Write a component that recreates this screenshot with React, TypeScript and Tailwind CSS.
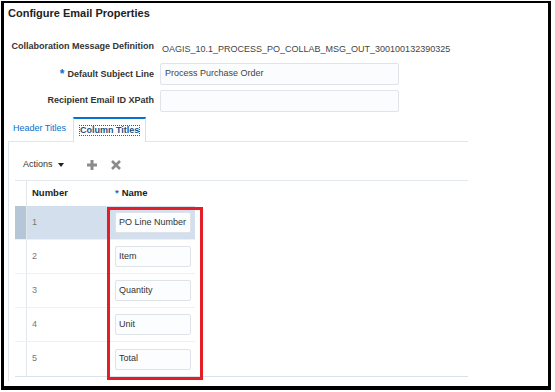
const font = { fontFamily: '"Liberation Sans", Arial, sans-serif' };

const rows = [
  { n: "1", name: "PO Line Number", selected: true },
  { n: "2", name: "Item" },
  { n: "3", name: "Quantity" },
  { n: "4", name: "Unit" },
  { n: "5", name: "Total" },
];

function FormRow({
  label,
  required,
  children,
}: {
  label: string;
  required?: boolean;
  children: React.ReactNode;
}) {
  return (
    <div className="flex h-[22px] items-center">
      <div className="w-[150px] text-right text-[9px] font-bold text-[#333]">
        {required && (
          <span className="mr-[3px] align-[-1px] text-[12px] font-bold text-[#0572ce]">*</span>
        )}
        {label}
      </div>
      <div className="ml-[6px]">{children}</div>
    </div>
  );
}

export default function App() {
  return (
    <div className="h-[392px] w-[555px] bg-white pl-[1px] pt-[1px] text-[#333]" style={font}>
      <div className="relative h-[389px] w-[550px] border-b-[4px] border-l-[3px] border-r-[3px] border-t-2 border-black">
        <h1 className="pl-[4px] pt-[3px] text-[11px] font-bold leading-[14px] text-[#222]">
          Configure Email Properties
        </h1>

        <div className="mt-[16px] flex flex-col gap-[5px]">
          <FormRow label="Collaboration Message Definition">
            <span className="pl-[2px] text-[9px] text-[#444]">
              OAGIS_10.1_PROCESS_PO_COLLAB_MSG_OUT_300100132390325
            </span>
          </FormRow>
          <FormRow label="Default Subject Line" required>
            <div className="flex h-[22px] w-[239px] items-center rounded-[2px] border border-[#dfe4e9] bg-[#fbfcfd] pl-[4px] text-[9px] text-[#444]">
              Process Purchase Order
            </div>
          </FormRow>
          <FormRow label="Recipient Email ID XPath">
            <div className="h-[22px] w-[239px] rounded-[2px] border border-[#dfe4e9] bg-[#fbfcfd]" />
          </FormRow>
        </div>

        {/* tabs */}
        <div className="ml-[4px] mt-[5px] flex h-[24px] items-start">
          <div className="flex h-[24px] items-center pl-[5px] pr-[7px] text-[9px] text-[#0572ce]">
            Header Titles
          </div>
          <div className="relative z-10 flex h-[25px] items-center border-l border-r border-t-2 border-l-[#d9dfe5] border-r-[#d9dfe5] border-t-[#0572ce] bg-white px-[5px]">
            <span className="border border-dotted border-[#555] text-[9px] font-bold leading-[9px] text-[#1b4f82]">
              Column Titles
            </span>
          </div>
        </div>

        <div className="ml-[4px] h-[240px] w-[460px] border-l border-t border-[#e1e6eb]">
          <div className="ml-[6px] w-[453px] border-b border-[#d9e1e9]">
            {/* toolbar */}
            <div className="flex h-[39px] items-center border-b border-[#e3e8ed] pl-[8px] pt-[7px]">
              <span className="text-[9px] text-[#333]">Actions</span>
              <svg className="ml-[5px]" width="6" height="4" viewBox="0 0 6 4">
                <path d="M0 0h6L3 4z" fill="#222" />
              </svg>
              <svg className="ml-[22px]" width="12" height="12" viewBox="0 0 12 12">
                <path d="M6 1v10M1 6h10" stroke="#8b8b8b" strokeWidth="3" />
              </svg>
              <svg className="ml-[13px]" width="10" height="10" viewBox="0 0 10 10">
                <path d="M1 1l8 8M9 1l-8 8" stroke="#8b8b8b" strokeWidth="2.6" />
              </svg>
            </div>

            {/* table */}
            <div className="w-[180px]">
              <div className="flex h-[25px] text-[9.5px] font-bold text-[#222]">
                <div className="w-[12px] border-r border-[#e3e8ed]" />
                <div className="flex w-[83px] items-center pl-[5px]">Number</div>
                <div className="flex w-[85px] items-center pl-[5px]">
                  <span className="mr-[3px] text-[#0572ce]">*</span>
                  Name
                </div>
              </div>
              {rows.map((r, i) => (
                <div
                  key={r.n}
                  className={`flex h-[34px] ${i < rows.length - 1 ? "border-b border-[#eef1f4]" : ""} ${
                    r.selected ? "bg-[#d3dfec]" : ""
                  }`}
                >
                  <div
                    className={`w-[12px] border-r border-[#e3e8ed] ${r.selected ? "bg-[#b5c6d7]" : ""}`}
                  />
                  <div className="flex w-[83px] items-center pl-[5px] text-[9px] text-[#777]">{r.n}</div>
                  <div className="flex w-[85px] items-center pl-[5px]">
                    <div className="flex h-[21px] w-[76px] items-center rounded-[2px] border border-[#dde3e9] bg-[#fcfdfe] pl-[3px] text-[9px] text-[#333]">
                      {r.name}
                    </div>
                  </div>
                </div>
              ))}
            </div>
          </div>
        </div>

        {/* red annotation box */}
        <div className="absolute left-[103px] top-[204px] h-[173px] w-[96px] border-[3px] border-[#e31e26]" />
      </div>
    </div>
  );
}
